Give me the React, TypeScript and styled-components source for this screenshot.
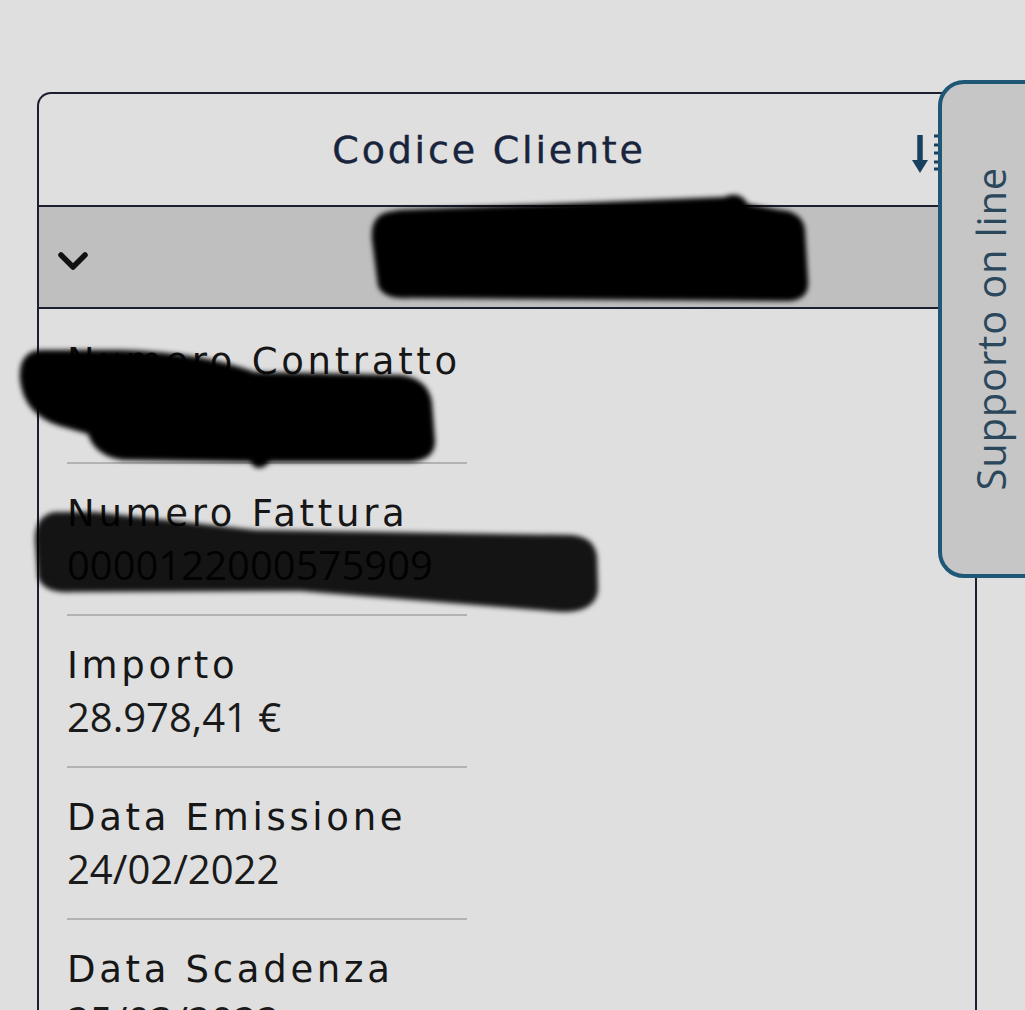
import styled, { createGlobalStyle } from "styled-components";

const GlobalStyle = createGlobalStyle`
  html, body {
    margin: 0;
    background: #dfdfdf;
    overflow: hidden;
  }
`;

const Page = styled.div`
  position: relative;
  width: 1025px;
  height: 1010px;
  padding: 92px 0 0 37px;
  box-sizing: border-box;
  overflow: hidden;
  background: #dfdfdf;
`;

const Card = styled.div`
  width: 940px;
  box-sizing: border-box;
  border: 2px solid #1b1f30;
  border-bottom: none;
  border-radius: 14px 14px 0 0;
  min-height: 960px;
`;

const Header = styled.div`
  height: 111px;
  display: grid;
  grid-template-columns: 1fr auto 1fr;
  align-items: center;
`;

const Title = styled.h1`
  grid-column: 2;
  margin: 0 36px 0 0;
  font-family: "DejaVu Sans", sans-serif;
  font-weight: 400;
  font-size: 38px;
  letter-spacing: 2.8px;
  color: #18243c;
  -webkit-text-stroke: 0.4px #18243c;
`;

const SortButton = styled.div`
  grid-column: 3;
  justify-self: end;
  margin: 9px 27px 0 0;
  display: flex;
`;

const SelectRow = styled.div`
  background: #bfbfbf;
  border-top: 2px solid #1b1f30;
  border-bottom: 2px solid #1b1f30;
  display: flex;
  align-items: center;
  padding: 10px 0 0 18px;
  box-sizing: border-box;
  height: 104px;
`;

const List = styled.div`
  padding: 3px 0 0 28px;
`;

const Item = styled.div`
  width: 400px;
  padding: 26px 0 30px;
  border-bottom: 2px solid #b2b2b2;
`;

const Label = styled.div`
  font-family: "DejaVu Sans", sans-serif;
  font-size: 37px;
  line-height: 48px;
  letter-spacing: 3.7px;
  color: #161616;
`;

const Value = styled.div`
  font-family: "Open Sans", sans-serif;
  font-size: 40px;
  line-height: 46px;
  padding-top: 4px;
  margin-bottom: -4px;
  color: #1a1a1a;
  min-height: 46px;
`;

const SupportTab = styled.div`
  position: absolute;
  left: 938px;
  top: 80px;
  width: 130px;
  height: 498px;
  box-sizing: border-box;
  border: 4px solid #1f5876;
  border-radius: 26px;
  background: #c6c6c6;
  display: flex;
  align-items: center;
  padding-left: 27px;
`;

const TabText = styled.span`
  writing-mode: vertical-rl;
  transform: rotate(180deg);
  font-family: "Open Sans", sans-serif;
  font-size: 40px;
  line-height: 44px;
  letter-spacing: 0.8px;
  color: #2b475c;
`;

const Scribbles = styled.svg`
  position: absolute;
  left: 0;
  top: 0;
  pointer-events: none;
`;

const items = [
  { label: "Numero Contratto", value: "" },
  { label: "Numero Fattura", value: "0000122000575909" },
  { label: "Importo", value: "28.978,41 €" },
  { label: "Data Emissione", value: "24/02/2022" },
  { label: "Data Scadenza", value: "25/03/2022" },
];

export default function App() {
  return (
    <>
      <GlobalStyle />
      <Page>
        <Card>
          <Header>
            <Title>Codice Cliente</Title>
            <SortButton>
              <svg width="36" height="42" viewBox="0 0 36 42">
                <path d="M8 2 V30" stroke="#173f5e" strokeWidth="5.5" />
                <path d="M0 27 L8 40 L16 27 Z" fill="#173f5e" />
                <g stroke="#173f5e" strokeWidth="3">
                  <path d="M22 3 H36" />
                  <path d="M22 12 H36" />
                  <path d="M22 20 H36" />
                  <path d="M22 29 H36" />
                  <path d="M22 36 H36" />
                </g>
              </svg>
            </SortButton>
          </Header>
          <SelectRow>
            <svg width="32" height="22" viewBox="0 0 32 22">
              <path d="M4 4 L16 16 L28 4" fill="none" stroke="#111" strokeWidth="5.5" strokeLinecap="round" strokeLinejoin="round" />
            </svg>
          </SelectRow>
          <List>
            {items.map((it) => (
              <Item key={it.label}>
                <Label>{it.label}</Label>
                <Value>{it.value}</Value>
              </Item>
            ))}
          </List>
        </Card>
        <SupportTab>
          <TabText>Supporto on line</TabText>
        </SupportTab>
        <Scribbles width="1025" height="1010" viewBox="0 0 1025 1010">
          <defs>
            <filter id="soft" x="-5%" y="-5%" width="110%" height="110%">
              <feGaussianBlur stdDeviation="2.5" />
            </filter>
          </defs>
          <g filter="url(#soft)">
            <path
              d="M388 212 Q370 216 372 240 L378 286 Q384 300 410 298 L790 301 Q810 299 808 280 L805 230 Q803 212 780 210 L748 204 Q740 190 724 197 L400 210 Z"
              fill="#050505"
            />
            <path
              d="M40 350 Q18 352 20 380 Q24 415 60 426 L88 434 Q95 456 122 460 L250 462 Q258 474 270 462 L410 462 Q436 460 435 440 L432 402 Q428 378 400 375 L255 372 Q200 352 120 350 Z"
              fill="#050505"
            />
            <path
              d="M55 512 Q35 515 35 540 L38 578 Q45 594 72 592 L300 591 L562 612 Q596 612 598 590 L597 556 Q594 536 570 535 L255 530 L95 512 Z"
              fill="#000"
              opacity="0.91"
            />
          </g>
        </Scribbles>
      </Page>
    </>
  );
}
